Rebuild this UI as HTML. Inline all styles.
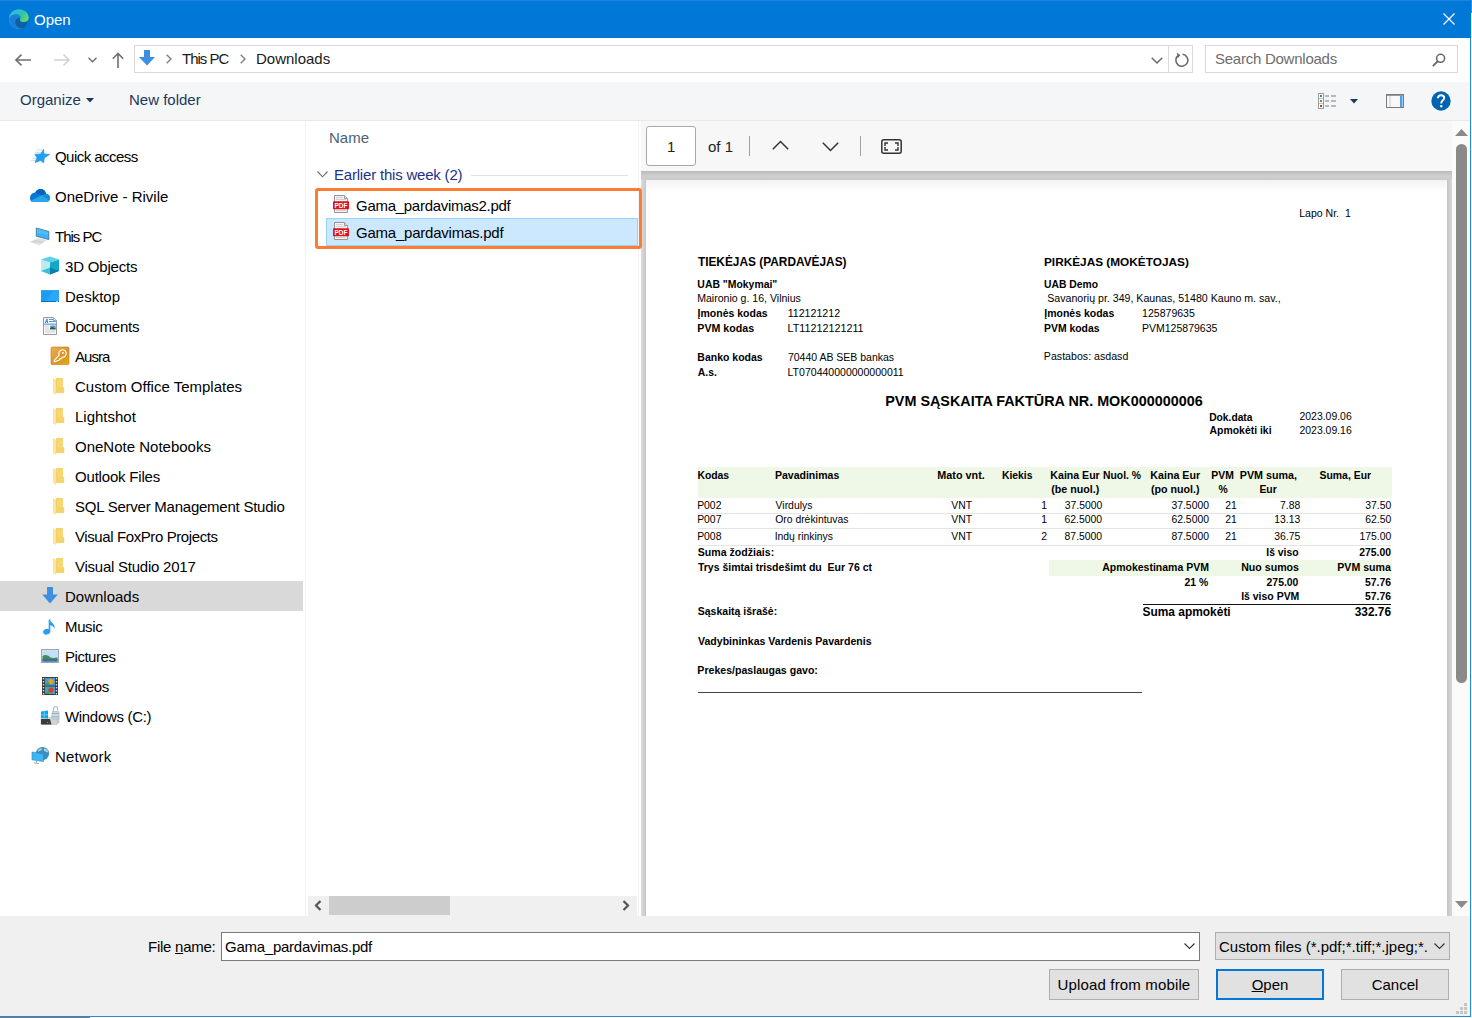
<!DOCTYPE html>
<html><head><meta charset="utf-8">
<style>
*{margin:0;padding:0;box-sizing:border-box}
html,body{width:1472px;height:1018px;overflow:hidden;background:#fff;font-family:"Liberation Sans",sans-serif;}
.a{position:absolute}
.t{position:absolute;white-space:nowrap;font-size:15px;line-height:18px;color:#000}
svg{position:absolute;overflow:visible}
#title{left:0;top:0;width:1471px;height:38px;background:#0078d7;border-top:1px solid #1a85db}
#rb{left:1470px;top:38px;width:1px;height:979px;background:#2b88d8}
#bb{left:0;top:1016px;width:1471px;height:1px;background:#2b88d8}
#tool{left:0;top:82px;width:1470px;height:39px;background:#f5f6f7;border-bottom:1px solid #e8e9eb}
#sep1{left:305px;top:121px;width:1px;height:795px;background:#f2f2f2}
#bottom{left:0;top:916px;width:1470px;height:100px;background:#f0f0f0}
.btn{position:absolute;background:#e1e1e1;border:1px solid #adadad;font-size:15px;text-align:center;line-height:29px;color:#000}
.nav .t{color:#000}
.pn,.pb{position:absolute;white-space:pre;line-height:1;color:#000}.pb{font-weight:bold}
</style></head><body>
<!-- title bar -->
<div id="title" class="a"></div>
<svg style="left:9px;top:9px" width="20" height="20" viewBox="0 0 20 20">
  <defs>
    <linearGradient id="eg1" x1="0" y1="0" x2="1" y2="0.6"><stop offset="0" stop-color="#35b8f0"/><stop offset="0.6" stop-color="#2ec3b0"/><stop offset="1" stop-color="#7ee04a"/></linearGradient>
  </defs>
  <path d="M10 0.3 C15.5 0.3 19.7 4.2 19.7 8.6 C19.7 11.8 17.2 13.2 14.5 13.2 C12 13.2 10.6 11.9 10.6 10.4 C10.6 9.5 11.3 8.9 11.3 8.9 C9.2 8.5 6.3 9.8 6.3 13.2 C6.3 16.4 9.4 19.6 13.8 19.7 C12.6 19.9 11.4 20 10 20 C4.5 20 0 15.5 0 10 C0 4.5 4.5 0.3 10 0.3 Z" fill="url(#eg1)"/>
  <path d="M0.2 9.3 C1.5 5.5 5.5 4.8 8 5.3 C10.5 5.8 12 7.3 11.6 8.8 C8.8 8.2 6.1 10 6.1 13.1 C6.1 16.5 9 19.4 13.8 19.8 C12.7 20 11.4 20 10 20 C4.2 20 0 15.4 0.2 9.3Z" fill="#1a7fd6"/>
  <path d="M6.1 13.1 C6.1 10 8.8 8.2 11.6 8.8 C11 9.6 10.8 10.2 10.8 10.7 C10.8 12.2 12.2 13.3 14.4 13.3 C16.2 13.3 17.8 12.7 18.6 12 C18 16.2 15.4 19.4 13.4 19.7 C9 19.3 6.1 16.4 6.1 13.1Z" fill="#0f5fa8"/>
</svg>
<div class="t" style="left:34px;top:11px;color:#fff">Open</div>
<svg style="left:1443px;top:13px" width="12" height="12" viewBox="0 0 12 12"><path d="M0.5 0.5L11.5 11.5M11.5 0.5L0.5 11.5" stroke="#fff" stroke-width="1.2"/></svg>

<!-- address row -->
<svg style="left:15px;top:54px" width="17" height="12" viewBox="0 0 17 12"><path d="M1 6H16M6.5 0.7L1 6L6.5 11.3" stroke="#6f6f6f" stroke-width="1.6" fill="none"/></svg>
<svg style="left:54px;top:54px" width="17" height="12" viewBox="0 0 17 12"><path d="M0 6H15M9.5 0.7L15 6L9.5 11.3" stroke="#d2d2d2" stroke-width="1.6" fill="none"/></svg>
<svg style="left:88px;top:57px" width="9" height="6" viewBox="0 0 9 6"><path d="M0.5 0.8L4.5 4.8L8.5 0.8" stroke="#707070" stroke-width="1.4" fill="none"/></svg>
<svg style="left:112px;top:52px" width="12" height="16" viewBox="0 0 12 16"><path d="M6 1.5V16M0.8 6.8L6 1.5L11.2 6.8" stroke="#6f6f6f" stroke-width="1.6" fill="none"/></svg>
<div class="a" style="left:134px;top:45px;width:1059px;height:28px;border:1px solid #d9d9d9"></div>
<div class="a" style="left:1168px;top:46px;width:1px;height:26px;background:#d9d9d9"></div>
<svg style="left:139px;top:50px" width="16" height="16" viewBox="0 0 16 16"><path d="M5 0H11V7H16L8 15.5L0 7H5Z" fill="#3d8fe0"/></svg>
<svg style="left:166px;top:54px" width="6" height="10" viewBox="0 0 6 10"><path d="M0.7 0.7L5 5L0.7 9.3" stroke="#808080" stroke-width="1.4" fill="none"/></svg>
<div class="t" style="left:182px;top:50px;color:#1a1a1a;letter-spacing:-1px">This PC</div>
<svg style="left:240px;top:54px" width="6" height="10" viewBox="0 0 6 10"><path d="M0.7 0.7L5 5L0.7 9.3" stroke="#808080" stroke-width="1.4" fill="none"/></svg>
<div class="t" style="left:256px;top:50px;color:#1a1a1a">Downloads</div>
<svg style="left:1151px;top:57px" width="12" height="7" viewBox="0 0 12 7"><path d="M0.7 0.7L6 6L11.3 0.7" stroke="#6a6a6a" stroke-width="1.5" fill="none"/></svg>
<svg style="left:1174px;top:53px" width="15" height="14" viewBox="0 0 15 14"><path d="M4.5 2.2A6 6 0 1 0 8.5 1.2" stroke="#6a6a6a" stroke-width="1.6" fill="none"/><path d="M3 0.5L5.3 2.3L3.4 4.6" stroke="#6a6a6a" stroke-width="1.5" fill="none"/></svg>
<div class="a" style="left:1205px;top:45px;width:253px;height:28px;border:1px solid #d9d9d9"></div>
<div class="t" style="left:1215px;top:50px;color:#6d6d6d;letter-spacing:-0.25px">Search Downloads</div>
<svg style="left:1432px;top:53px" width="14" height="14" viewBox="0 0 14 14"><circle cx="8.6" cy="5.3" r="4" stroke="#6a6a6a" stroke-width="1.6" fill="none"/><path d="M6 8L0.8 13.2" stroke="#6a6a6a" stroke-width="1.8"/></svg>

<!-- toolbar -->
<div id="tool" class="a"></div>
<div class="t" style="left:20px;top:91px;color:#1e395b">Organize</div>
<svg style="left:86px;top:98px" width="8" height="5" viewBox="0 0 8 5"><path d="M0 0H8L4 4.5Z" fill="#1e395b"/></svg>
<div class="t" style="left:129px;top:91px;color:#1e395b">New folder</div>
<svg style="left:1318px;top:93px" width="19" height="16" viewBox="0 0 19 16">
 <rect x="0.5" y="0.5" width="5" height="15" fill="#fff" stroke="#9a9a9a"/>
 <rect x="2" y="2" width="2" height="2" fill="#3a7ac8"/><rect x="2" y="7" width="2" height="2" fill="#5aa040"/><rect x="2" y="12" width="2" height="2" fill="#c83a2a"/><path d="M1 5.5H5M1 10.5H5" stroke="#b0b0b0" stroke-width="0.8"/>
 <path d="M7 3H11M13 3H18M7 8H11M13 8H18M7 13H11M13 13H18" stroke="#7a7a7a" stroke-width="1"/>
</svg>
<svg style="left:1350px;top:99px" width="8" height="5" viewBox="0 0 8 5"><path d="M0 0H8L4 4.5Z" fill="#1e395b"/></svg>
<svg style="left:1386px;top:94px" width="18" height="14" viewBox="0 0 18 14"><rect x="0.5" y="0.5" width="17" height="13" fill="#f8f8f8" stroke="#7a7a7a"/><rect x="1" y="1" width="16" height="1" fill="#9a9a9a"/><rect x="14" y="2" width="2.5" height="11" fill="#4da0e8"/><rect x="3.5" y="2" width="1" height="11" fill="#c8c8c8"/></svg>
<svg style="left:1431px;top:91px" width="20" height="20" viewBox="0 0 20 20"><circle cx="10" cy="10" r="9.7" fill="#0063b1"/><path d="M6.9 7.2C6.9 5.2 8.3 4.2 10.1 4.2C12 4.2 13.2 5.4 13.2 7C13.2 9.3 10.3 9.5 10.3 11.9V12.6" stroke="#fff" stroke-width="1.9" fill="none"/><rect x="9.2" y="14.1" width="2.2" height="2.2" fill="#fff"/></svg>

<!-- nav pane -->
<div id="nav">
<svg width="0" height="0" style="left:0;top:0">
 <defs>
  
 </defs>
</svg>
<!-- Quick access star -->
<svg style="left:28px;top:144px" width="26" height="24" viewBox="0 0 26 24"><path d="M8.5 5.8H14M7 8.3H13M4.5 14.2H8.5M3 16.3H8" stroke="#b5dcf7" stroke-width="0.9"/><path d="M15.6 5.2L16 9.9L21.7 10.4L16.3 13.9L15.6 18.9L12.7 16.5L7.1 18.6L9 13.7L6.8 10.4L12.7 9.9Z" fill="#22a0f0" stroke="#1a8ce0" stroke-width="0.6" stroke-linejoin="round"/></svg>
<div class="t" style="left:55px;top:148px;letter-spacing:-0.55px">Quick access</div>
<!-- OneDrive -->
<svg style="left:28px;top:184px" width="26" height="22" viewBox="0 0 26 22"><path d="M4.5 17.9C2.8 17.9 2 16 2 14.3C2 11.2 4.2 8.8 7.2 8.6C8.4 6.3 10.3 5.1 12.4 5.1C15.3 5.1 17.4 7 18 9.8C20.3 10 22 11.8 22 14.1C22 16.3 20.4 17.9 18.3 17.9Z" fill="#0a78d8"/><path d="M7.2 8.6C8.4 6.3 10.3 5.1 12.4 5.1C15.3 5.1 17.4 7 18 9.8L13.8 11.2Z" fill="#0364b8"/><path d="M13.8 11.2L18 9.8C20.3 10 22 11.8 22 14.1C22 15.2 21.7 16 21.3 16.5Z" fill="#1490df"/><path d="M3.2 16.6L13.8 11.2L21.4 16.4C20.8 17.4 19.7 17.9 18.3 17.9H4.5C3.9 17.9 3.5 17.3 3.2 16.6Z" fill="#28a8ea"/></svg>
<div class="t" style="left:55px;top:188px">OneDrive - Rivile</div>
<!-- This PC -->
<svg style="left:28px;top:224px" width="26" height="24" viewBox="0 0 26 24"><path d="M2.5 17.8L10.5 14.8L18 16.2L11.5 20.8Z" fill="#dde1e5" stroke="#c9ced3" stroke-width="0.5"/><path d="M5 17.5L13 18.5M7 16.5L15 17.8" stroke="#c3c8cd" stroke-width="0.6"/><path d="M8.3 4L20.8 7.5V15.6L8.3 12.2Z" fill="#3cb4f5" stroke="#3a6f90" stroke-width="0.8" stroke-linejoin="round"/><path d="M9 4.8L20 8V11L9 9Z" fill="#5cc4f8" opacity="0.6"/></svg>
<div class="t" style="left:55px;top:228px;letter-spacing:-1px">This PC</div>
<!-- 3D objects -->
<svg style="left:40px;top:256px" width="20" height="19" viewBox="0 0 20 19"><path d="M1 3.5L10 6.5V18.5L1 15Z" fill="#bfeaf2"/><path d="M10 6.5L19 3.5V15L10 18.5Z" fill="#14a8c8"/><path d="M1 3.5L10 0.5L19 3.5L10 6.5Z" fill="#5cd0e6"/><path d="M1 15L10 11.5V18.5Z" fill="#38c0d8"/><path d="M10 11.5L19 15L10 18.5Z" fill="#0a7fa8"/></svg>
<div class="t" style="left:65px;top:258px;letter-spacing:-0.18px">3D Objects</div>
<!-- Desktop -->
<svg style="left:41px;top:290px" width="18" height="12" viewBox="0 0 18 12"><rect x="0" y="0" width="18" height="12" fill="#1c9cf6"/><path d="M4 12L13 0H18V12Z" fill="#2aa6fa"/><rect x="0" y="0" width="18" height="0.8" fill="#3aa8f0"/><rect x="0" y="11" width="18" height="1" fill="#0d6fc0"/><rect x="15" y="11" width="2" height="1" fill="#9ccff0"/></svg>
<div class="t" style="left:65px;top:288px">Desktop</div>
<!-- Documents -->
<svg style="left:43px;top:317px" width="14" height="18" viewBox="0 0 14 18"><path d="M0.5 0.5H10.5L13.5 3.5V17.5H0.5Z" fill="#fbfbfb" stroke="#8e8e8e" stroke-width="0.9"/><path d="M10.5 0.5V3.5H13.5" fill="#e8e8e8" stroke="#8e8e8e" stroke-width="0.7"/><path d="M2.2 6L4 1.8L4.6 6M2.8 4.5H4.5" stroke="#2a7ad8" stroke-width="0.9" fill="none"/><path d="M6 2.5H10M6 4.5H12.8" stroke="#3a8ae0" stroke-width="0.9"/><rect x="1" y="6.6" width="12" height="1" fill="#3a8ae0"/><path d="M2 9H6M2 11H6M2 13H12.5M2 15H12.5" stroke="#c8c8c8" stroke-width="0.9"/><rect x="7.2" y="8.5" width="5.5" height="3.8" fill="#5a9ac8"/><path d="M7.2 11L9 10L12.7 11.5V12.3H7.2Z" fill="#2a5a3a"/></svg>
<div class="t" style="left:65px;top:318px;letter-spacing:-0.16px">Documents</div>
<!-- Ausra -->
<svg style="left:46px;top:342px" width="26" height="26" viewBox="0 0 26 26"><defs><linearGradient id="ag" x1="0" y1="0" x2="1" y2="1"><stop offset="0" stop-color="#eab060"/><stop offset="0.6" stop-color="#dc9420"/><stop offset="1" stop-color="#e2b018"/></linearGradient></defs><rect x="5" y="5" width="18" height="17.6" rx="1.3" fill="url(#ag)" stroke="#c07a10" stroke-width="0.6"/><path d="M13.2 13.1A3.7 3.7 0 1 1 16.6 15.2L14.9 16.9L14 16.6L13.1 18.2L11.3 18.7L9.6 19.6C8.6 20 7.8 19.4 8.3 18.4Z" fill="#dc9628" stroke="#fff" stroke-width="1.15" stroke-linejoin="round"/><circle cx="16.9" cy="10.9" r="1" fill="#fff"/></svg>
<div class="t" style="left:75px;top:348px;letter-spacing:-0.95px">Ausra</div>
<svg style="left:48px;top:374px" width="22" height="24" viewBox="0 0 22 24"><path d="M5 4H15V13H16.2V19H8V4Z" fill="#f5d46f"/><path d="M8.5 6L15 5V13H8.5Z" fill="#f7d878" opacity="0.7"/><path d="M5 4L8.6 6.2V18.8L7.8 21L5 19.2Z" fill="#fde49a"/><path d="M8.6 6.2V18.8" stroke="#ecc860" stroke-width="0.7"/></svg>
<div class="t" style="left:75px;top:378px">Custom Office Templates</div>
<svg style="left:48px;top:404px" width="22" height="24" viewBox="0 0 22 24"><path d="M5 4H15V13H16.2V19H8V4Z" fill="#f5d46f"/><path d="M8.5 6L15 5V13H8.5Z" fill="#f7d878" opacity="0.7"/><path d="M5 4L8.6 6.2V18.8L7.8 21L5 19.2Z" fill="#fde49a"/><path d="M8.6 6.2V18.8" stroke="#ecc860" stroke-width="0.7"/></svg>
<div class="t" style="left:75px;top:408px">Lightshot</div>
<svg style="left:48px;top:434px" width="22" height="24" viewBox="0 0 22 24"><path d="M5 4H15V13H16.2V19H8V4Z" fill="#f5d46f"/><path d="M8.5 6L15 5V13H8.5Z" fill="#f7d878" opacity="0.7"/><path d="M5 4L8.6 6.2V18.8L7.8 21L5 19.2Z" fill="#fde49a"/><path d="M8.6 6.2V18.8" stroke="#ecc860" stroke-width="0.7"/></svg>
<div class="t" style="left:75px;top:438px">OneNote Notebooks</div>
<svg style="left:48px;top:464px" width="22" height="24" viewBox="0 0 22 24"><path d="M5 4H15V13H16.2V19H8V4Z" fill="#f5d46f"/><path d="M8.5 6L15 5V13H8.5Z" fill="#f7d878" opacity="0.7"/><path d="M5 4L8.6 6.2V18.8L7.8 21L5 19.2Z" fill="#fde49a"/><path d="M8.6 6.2V18.8" stroke="#ecc860" stroke-width="0.7"/></svg>
<div class="t" style="left:75px;top:468px;letter-spacing:-0.19px">Outlook Files</div>
<svg style="left:48px;top:494px" width="22" height="24" viewBox="0 0 22 24"><path d="M5 4H15V13H16.2V19H8V4Z" fill="#f5d46f"/><path d="M8.5 6L15 5V13H8.5Z" fill="#f7d878" opacity="0.7"/><path d="M5 4L8.6 6.2V18.8L7.8 21L5 19.2Z" fill="#fde49a"/><path d="M8.6 6.2V18.8" stroke="#ecc860" stroke-width="0.7"/></svg>
<div class="t" style="left:75px;top:498px;letter-spacing:-0.24px">SQL Server Management Studio</div>
<svg style="left:48px;top:524px" width="22" height="24" viewBox="0 0 22 24"><path d="M5 4H15V13H16.2V19H8V4Z" fill="#f5d46f"/><path d="M8.5 6L15 5V13H8.5Z" fill="#f7d878" opacity="0.7"/><path d="M5 4L8.6 6.2V18.8L7.8 21L5 19.2Z" fill="#fde49a"/><path d="M8.6 6.2V18.8" stroke="#ecc860" stroke-width="0.7"/></svg>
<div class="t" style="left:75px;top:528px;letter-spacing:-0.4px">Visual FoxPro Projects</div>
<svg style="left:48px;top:554px" width="22" height="24" viewBox="0 0 22 24"><path d="M5 4H15V13H16.2V19H8V4Z" fill="#f5d46f"/><path d="M8.5 6L15 5V13H8.5Z" fill="#f7d878" opacity="0.7"/><path d="M5 4L8.6 6.2V18.8L7.8 21L5 19.2Z" fill="#fde49a"/><path d="M8.6 6.2V18.8" stroke="#ecc860" stroke-width="0.7"/></svg>
<div class="t" style="left:75px;top:558px;letter-spacing:-0.24px">Visual Studio 2017</div>
<div class="a" style="left:0;top:581px;width:303px;height:30px;background:#d9d9d9"></div>
<svg style="left:42px;top:587px" width="16" height="17" viewBox="0 0 16 17"><path d="M5 0H11V7.5H15.8L8 16.5L0.2 7.5H5Z" fill="#3d8fe0"/></svg>
<div class="t" style="left:65px;top:588px">Downloads</div>
<svg style="left:42px;top:619px" width="15" height="16" viewBox="0 0 15 16"><path d="M7.5 0.5V12.5" stroke="#2a9df4" stroke-width="1.6"/><ellipse cx="4.7" cy="12.7" rx="3.6" ry="2.8" fill="#2a9df4" transform="rotate(-20 4.7 12.7)"/><path d="M7.5 0.5C9 4 13.5 4.5 12.5 10C12.2 8 10 6.5 7.5 6Z" fill="#2a9df4"/></svg>
<div class="t" style="left:65px;top:618px;letter-spacing:-0.37px">Music</div>
<svg style="left:41px;top:649px" width="18" height="14" viewBox="0 0 18 14"><rect x="0.5" y="0.5" width="17" height="13" fill="#dfe8ee" stroke="#9aa4aa"/><rect x="1.5" y="1.5" width="15" height="11" fill="#bfe0f5"/><path d="M1.5 7C4 5 7 6 9 8C11 9.5 14 9 16.5 8.5V12.5H1.5Z" fill="#4a8a5a"/><path d="M1.5 10C5 9.5 10 10.5 16.5 10V12.5H1.5Z" fill="#3a6ea8"/></svg>
<div class="t" style="left:65px;top:648px;letter-spacing:-0.47px">Pictures</div>
<svg style="left:42px;top:677px" width="16" height="18" viewBox="0 0 16 18"><rect x="0" y="0" width="16" height="18" fill="#3a3a3a"/><rect x="3" y="1" width="10" height="7.5" fill="#4a9ad8"/><rect x="3" y="9.5" width="10" height="7.5" fill="#4a9ad8"/><circle cx="9" cy="4.5" r="2.6" fill="#e8a020"/><circle cx="9" cy="13" r="2.6" fill="#d84020"/><path d="M3 7L7 5V8.5H3ZM3 16L7 14V17H3Z" fill="#40a040"/><g fill="#ddd"><rect x="0.8" y="1" width="1.4" height="1.4"/><rect x="0.8" y="4" width="1.4" height="1.4"/><rect x="0.8" y="7" width="1.4" height="1.4"/><rect x="0.8" y="10" width="1.4" height="1.4"/><rect x="0.8" y="13" width="1.4" height="1.4"/><rect x="0.8" y="16" width="1.4" height="1.4"/><rect x="13.8" y="1" width="1.4" height="1.4"/><rect x="13.8" y="4" width="1.4" height="1.4"/><rect x="13.8" y="7" width="1.4" height="1.4"/><rect x="13.8" y="10" width="1.4" height="1.4"/><rect x="13.8" y="13" width="1.4" height="1.4"/><rect x="13.8" y="16" width="1.4" height="1.4"/></g></svg>
<div class="t" style="left:65px;top:678px;letter-spacing:-0.26px">Videos</div>
<svg style="left:28px;top:702px" width="36" height="26" viewBox="0 0 36 26"><path d="M13 17L16 15H31V20.5L28.5 22.5H13Z" fill="#dcdfe2" stroke="#a8adb2" stroke-width="0.5"/><path d="M13 17H28.5V22.5H13Z" fill="#d0d4d8"/><path d="M13 17H22L23.5 22.5H13Z" fill="#3a3d40"/><path d="M28.5 17L31 15V20.5L28.5 22.5Z" fill="#c4c8cc"/><rect x="19" y="20" width="1.2" height="1" fill="#3ac040"/><path d="M13 9.5L20 8.5V16.5L13 16Z" fill="#0aa6ee"/><path d="M16.3 9V16.2M13 12.8H20" stroke="#9fdcf8" stroke-width="0.6"/><path d="M25.5 10.5V7C25.5 5.3 26.6 4.5 27.6 4.5C28.6 4.5 29.7 5.3 29.7 7V8.5" fill="none" stroke="#b4bcc2" stroke-width="1.1"/><rect x="24" y="9.5" width="7" height="7.5" rx="0.8" fill="#d4d9dd" stroke="#9aa4aa" stroke-width="0.5"/><path d="M24 11.5H31M24 14.8H31" stroke="#6aa0c8" stroke-width="0.7"/></svg>
<div class="t" style="left:65px;top:708px;letter-spacing:-0.32px">Windows (C:)</div>
<svg style="left:28px;top:744px" width="26" height="26" viewBox="0 0 26 26"><circle cx="14.5" cy="9.5" r="6.6" fill="#3d8ebc"/><path d="M10 6C11.5 4.2 13.5 4 14.5 5C13.5 6.5 11.5 6.5 10.5 8M16 4.5C18 4.5 20 6 20.5 8.5C19 8.5 17.5 7 16 7Z" fill="#bfe0f0" opacity="0.85"/><path d="M4 8L15.5 10V17.5L4 15.8Z" fill="#3db6f6" stroke="#2a84c0" stroke-width="0.6"/><path d="M6 18.8L11 19.6M8.5 17V19" stroke="#a8b0b8" stroke-width="1"/></svg>
<div class="t" style="left:55px;top:748px;letter-spacing:0.2px">Network</div>
</div>
<div id="sep1" class="a"></div>

<!-- file pane -->
<div id="files">
<div class="a" style="left:638px;top:121px;width:1px;height:795px;background:#f3f3f3"></div>
<div class="t" style="left:329px;top:129px;color:#4c607a">Name</div>
<svg style="left:317px;top:171px" width="11" height="7" viewBox="0 0 11 7"><path d="M0.5 0.5L5.5 5.8L10.5 0.5" stroke="#6a6a6a" stroke-width="1.1" fill="none"/></svg>
<div class="t" style="left:334px;top:166px;color:#1e3287;letter-spacing:-0.2px">Earlier this week (2)</div>
<div class="a" style="left:471px;top:175px;width:157px;height:1px;background:#e2e2e2"></div>
<div class="a" style="left:326px;top:218px;width:312px;height:28px;background:#cce8ff;border:1px solid #99d1ff"></div>
<svg width="0" height="0" style="left:0;top:0"><defs></defs></svg>
<svg style="left:333px;top:195px" width="16" height="18" viewBox="0 0 16 18"><path d="M1.5 0.5H11.5L14.5 3.5V17.5H1.5Z" fill="#f4f4f4" stroke="#8a8a8a" stroke-width="0.9"/><path d="M11.5 0.5V3.5H14.5" fill="#ddd" stroke="#8a8a8a" stroke-width="0.8"/><path d="M3 2.5H10M3 4.5H13M3 15.5H13" stroke="#d0d0d0" stroke-width="1"/><rect x="0" y="6.3" width="16" height="8" rx="0.8" fill="#e01020"/><text x="8" y="12.9" font-family="Liberation Sans" font-size="6.6" font-weight="bold" fill="#fff" text-anchor="middle">PDF</text></svg>
<div class="t" style="left:356px;top:197px;letter-spacing:-0.28px">Gama_pardavimas2.pdf</div>
<svg style="left:333px;top:222px" width="16" height="18" viewBox="0 0 16 18"><path d="M1.5 0.5H11.5L14.5 3.5V17.5H1.5Z" fill="#f4f4f4" stroke="#8a8a8a" stroke-width="0.9"/><path d="M11.5 0.5V3.5H14.5" fill="#ddd" stroke="#8a8a8a" stroke-width="0.8"/><path d="M3 2.5H10M3 4.5H13M3 15.5H13" stroke="#d0d0d0" stroke-width="1"/><rect x="0" y="6.3" width="16" height="8" rx="0.8" fill="#e01020"/><text x="8" y="12.9" font-family="Liberation Sans" font-size="6.6" font-weight="bold" fill="#fff" text-anchor="middle">PDF</text></svg>
<div class="t" style="left:356px;top:224px;letter-spacing:-0.23px">Gama_pardavimas.pdf</div>

<!-- h scrollbar -->
<div class="a" style="left:308px;top:896px;width:329px;height:20px;background:#f0f0f0"></div>
<div class="a" style="left:329px;top:896px;width:121px;height:19px;background:#cdcdcd"></div>
<svg style="left:314px;top:900px" width="8" height="11" viewBox="0 0 8 11"><path d="M6.5 1L2 5.5L6.5 10" stroke="#555" stroke-width="2.2" fill="none"/></svg>
<svg style="left:622px;top:900px" width="8" height="11" viewBox="0 0 8 11"><path d="M1.5 1L6 5.5L1.5 10" stroke="#555" stroke-width="2.2" fill="none"/></svg>
</div>

<!-- preview pane -->
<div id="preview">
<div class="a" style="left:641px;top:121px;width:811px;height:50px;background:#f7f7f7"></div>
<div class="a" style="left:646px;top:126px;width:50px;height:40px;background:#fff;border:1px solid #a8a8a8;border-radius:3px"></div>
<div class="t" style="left:667px;top:138px;color:#222">1</div>
<div class="t" style="left:708px;top:138px;color:#222">of 1</div>
<div class="a" style="left:749px;top:136px;width:1px;height:20px;background:#a0a0a0"></div>
<svg style="left:772px;top:140px" width="17" height="10" viewBox="0 0 17 10"><path d="M0.8 9.2L8.5 1.5L16.2 9.2" stroke="#333" stroke-width="1.5" fill="none"/></svg>
<svg style="left:822px;top:142px" width="17" height="10" viewBox="0 0 17 10"><path d="M0.8 0.8L8.5 8.5L16.2 0.8" stroke="#333" stroke-width="1.5" fill="none"/></svg>
<div class="a" style="left:860px;top:136px;width:1px;height:20px;background:#a0a0a0"></div>
<svg style="left:881px;top:139px" width="21" height="15" viewBox="0 0 21 15"><rect x="0.8" y="0.8" width="19.4" height="13.4" rx="2" fill="none" stroke="#333" stroke-width="1.5"/><path d="M4 7V4H7M14 4H17V7M17 8V11H14M7 11H4V8" stroke="#333" stroke-width="1.4" fill="none"/></svg>
<!-- frame -->
<div class="a" style="left:641px;top:171px;width:811px;height:745px;background:linear-gradient(#b9b9b9,#d0d0d0 5px,#c9c9c9 9px,#d2d2d2 10px)"></div>
<div class="a" style="left:641px;top:179px;width:5px;height:737px;background:linear-gradient(90deg,#dcdcdc,#c6c6c6)"></div>
<div class="a" style="left:1447px;top:179px;width:5px;height:737px;background:linear-gradient(90deg,#c4c4c4,#d8d8d8)"></div>
<div id="page" class="a" style="left:646px;top:180px;width:801px;height:736px;background:linear-gradient(#f2f2f2,#fff 12px,#fff)"></div>
<div id="pdf">
<div class="a" style="left:698px;top:467px;width:694px;height:31px;background:#eff8e6"></div>
<div class="a" style="left:698px;top:513px;width:694px;height:1px;background:#e4e4e4"></div>
<div class="a" style="left:698px;top:528px;width:693px;height:1px;background:#e4e4e4"></div>
<div class="a" style="left:698px;top:545px;width:693px;height:1px;background:#e4e4e4"></div>
<div class="a" style="left:1049px;top:560px;width:343px;height:16px;background:#eff8e6"></div>
<div class="a" style="left:1143px;top:604px;width:248px;height:1px;background:#111"></div>
<div class="a" style="left:698px;top:692px;width:444px;height:1px;background:#444"></div>
<svg class="a" style="left:0;top:0;overflow:visible" width="1472" height="1018"><g font-family="Liberation Sans" fill="#000" style="white-space:pre"><text x="1299.16" y="217" font-size="10.55">Lapo Nr.  1</text>
<text x="697.88" y="266" font-size="11.89" font-weight="bold">TIEKĖJAS (PARDAVĖJAS)</text>
<text x="697.37" y="288" font-size="10.43" font-weight="bold">UAB "Mokymai"</text>
<text x="697.15" y="302" font-size="10.57">Maironio g. 16, Vilnius</text>
<text x="697.58" y="317" font-size="10.51" font-weight="bold">Įmonės kodas</text>
<text x="787.65" y="317" font-size="10.65">112121212</text>
<text x="697.36" y="332" font-size="10.64" font-weight="bold">PVM kodas</text>
<text x="787.54" y="332" font-size="10.77">LT11212121211</text>
<text x="697.37" y="361" font-size="10.49" font-weight="bold">Banko kodas</text>
<text x="787.88" y="361" font-size="10.5">70440 AB SEB bankas</text>
<text x="697.79" y="376" font-size="10.4" font-weight="bold">A.s.</text>
<text x="787.56" y="376" font-size="10.54">LT070440000000000011</text>
<text x="1043.99" y="266" font-size="11.82" font-weight="bold">PIRKĖJAS (MOKĖTOJAS)</text>
<text x="1044.08" y="288" font-size="10.33" font-weight="bold">UAB Demo</text>
<text x="1047.28" y="302" font-size="10.61">Savanorių pr. 349, Kaunas, 51480 Kauno m. sav.,</text>
<text x="1044.28" y="317" font-size="10.51" font-weight="bold">Įmonės kodas</text>
<text x="1142.06" y="317" font-size="10.55">125879635</text>
<text x="1044.08" y="332" font-size="10.4" font-weight="bold">PVM kodas</text>
<text x="1141.96" y="332" font-size="10.52">PVM125879635</text>
<text x="1043.85" y="360" font-size="10.64">Pastabos: asdasd</text>
<text x="885.24" y="406" font-size="14.38" font-weight="bold">PVM SĄSKAITA FAKTŪRA NR. MOK000000006</text>
<text x="1209.18" y="421" font-size="10.25" font-weight="bold">Dok.data</text>
<text x="1299.48" y="420" font-size="10.45">2023.09.06</text>
<text x="1209.59" y="434" font-size="10.43" font-weight="bold">Apmokėti iki</text>
<text x="1299.48" y="434" font-size="10.45">2023.09.16</text>
<text x="697.38" y="479" font-size="10.4" font-weight="bold">Kodas</text>
<text x="774.97" y="479" font-size="10.53" font-weight="bold">Pavadinimas</text>
<text x="937.35" y="479" font-size="10.8" font-weight="bold">Mato vnt.</text>
<text x="1001.88" y="479" font-size="10.4" font-weight="bold">Kiekis</text>
<text x="1050.36" y="479" font-size="10.59" font-weight="bold">Kaina Eur</text>
<text x="1102.98" y="479" font-size="10.4" font-weight="bold">Nuol. %</text>
<text x="1051.27" y="493" font-size="10.69" font-weight="bold">(be nuol.)</text>
<text x="1150.36" y="479" font-size="10.65" font-weight="bold">Kaina Eur</text>
<text x="1151.07" y="493" font-size="10.67" font-weight="bold">(po nuol.)</text>
<text x="1211.28" y="479" font-size="10.4" font-weight="bold">PVM</text>
<text x="1218.39" y="493" font-size="10.4" font-weight="bold">%</text>
<text x="1239.76" y="479" font-size="10.73" font-weight="bold">PVM suma,</text>
<text x="1259.38" y="493" font-size="10.4" font-weight="bold">Eur</text>
<text x="1319.49" y="479" font-size="10.45" font-weight="bold">Suma, Eur</text>
<text x="697.79" y="556" font-size="10.58" font-weight="bold">Suma žodžiais:</text>
<text x="1266.28" y="556" font-size="10.4" font-weight="bold">Iš viso</text>
<text x="1359.29" y="556" font-size="10.4" font-weight="bold">275.00</text>
<text x="697.89" y="571" font-size="10.53" font-weight="bold">Trys šimtai trisdešimt du  Eur 76 ct</text>
<text x="1102.19" y="571" font-size="10.5" font-weight="bold">Apmokestinama PVM</text>
<text x="1241.16" y="571" font-size="10.64" font-weight="bold">Nuo sumos</text>
<text x="1337.26" y="571" font-size="10.6" font-weight="bold">PVM suma</text>
<text x="1184.49" y="586" font-size="10.4" font-weight="bold">21 %</text>
<text x="1266.59" y="586" font-size="10.4" font-weight="bold">275.00</text>
<text x="1364.99" y="586" font-size="10.4" font-weight="bold">57.76</text>
<text x="1241.17" y="600" font-size="10.47" font-weight="bold">Iš viso PVM</text>
<text x="1364.99" y="600" font-size="10.4" font-weight="bold">57.76</text>
<text x="1142.46" y="616" font-size="11.95" font-weight="bold">Suma apmokėti</text>
<text x="1354.76" y="616" font-size="11.85" font-weight="bold">332.76</text>
<text x="697.79" y="615" font-size="10.51" font-weight="bold">Sąskaitą išrašė:</text>
<text x="698.00" y="645" font-size="10.55" font-weight="bold">Vadybininkas Vardenis Pavardenis</text>
<text x="697.36" y="674" font-size="10.59" font-weight="bold">Prekes/paslaugas gavo:</text>
<text x="697.17" y="509" font-size="10.4">P002</text>
<text x="775.60" y="509" font-size="10.4">Virdulys</text>
<text x="951.25" y="509" font-size="10.4">VNT</text>
<text x="1047.08" y="509" font-size="10.4" text-anchor="end">1</text>
<text x="1064.69" y="509" font-size="10.4">37.5000</text>
<text x="1208.98" y="509" font-size="10.4" text-anchor="end">37.5000</text>
<text x="1225.18" y="509" font-size="10.4">21</text>
<text x="1300.28" y="509" font-size="10.4" text-anchor="end">7.88</text>
<text x="1391.28" y="509" font-size="10.4" text-anchor="end">37.50</text>
<text x="697.17" y="523" font-size="10.4">P007</text>
<text x="775.18" y="523" font-size="10.4">Oro drėkintuvas</text>
<text x="951.25" y="523" font-size="10.4">VNT</text>
<text x="1047.08" y="523" font-size="10.4" text-anchor="end">1</text>
<text x="1064.48" y="523" font-size="10.4">62.5000</text>
<text x="1208.98" y="523" font-size="10.4" text-anchor="end">62.5000</text>
<text x="1225.18" y="523" font-size="10.4">21</text>
<text x="1300.28" y="523" font-size="10.4" text-anchor="end">13.13</text>
<text x="1391.28" y="523" font-size="10.4" text-anchor="end">62.50</text>
<text x="697.17" y="540" font-size="10.4">P008</text>
<text x="774.66" y="540" font-size="10.4">Indų rinkinys</text>
<text x="951.25" y="540" font-size="10.4">VNT</text>
<text x="1047.08" y="540" font-size="10.4" text-anchor="end">2</text>
<text x="1064.58" y="540" font-size="10.4">87.5000</text>
<text x="1208.98" y="540" font-size="10.4" text-anchor="end">87.5000</text>
<text x="1225.18" y="540" font-size="10.4">21</text>
<text x="1300.28" y="540" font-size="10.4" text-anchor="end">36.75</text>
<text x="1391.28" y="540" font-size="10.4" text-anchor="end">175.00</text></g></svg>
</div>
<!-- v scrollbar -->
<div class="a" style="left:1452px;top:121px;width:18px;height:795px;background:#fbfbfb"></div>
<svg style="left:1455px;top:129px" width="13" height="7" viewBox="0 0 13 7"><path d="M6.5 0L13 7H0Z" fill="#8a8a8a"/></svg>
<div class="a" style="left:1456px;top:144px;width:11px;height:539px;background:#8a8a8a;border-radius:5.5px"></div>
<svg style="left:1455px;top:901px" width="13" height="7" viewBox="0 0 13 7"><path d="M0 0H13L6.5 7Z" fill="#8a8a8a"/></svg>
</div>

<!-- bottom -->
<div id="bottom" class="a"></div>
<div class="t" style="left:148px;top:938px;letter-spacing:-0.25px">File <u>n</u>ame:</div>
<div class="a" style="left:221px;top:932px;width:979px;height:29px;background:#fff;border:1px solid #7a7a7a"></div>
<div class="t" style="left:225px;top:938px;letter-spacing:-0.25px">Gama_pardavimas.pdf</div>
<svg style="left:1184px;top:943px" width="11" height="6" viewBox="0 0 11 6"><path d="M0.5 0.5L5.5 5.5L10.5 0.5" stroke="#333" stroke-width="1.1" fill="none"/></svg>
<div class="a" style="left:1215px;top:932px;width:235px;height:28px;background:#e1e1e1;border:1px solid #adadad;overflow:hidden"><div class="a" style="left:3px;top:0;width:208px;height:26px;overflow:hidden"><div class="t" style="left:0;top:5px">Custom files (*.pdf;*.tiff;*.jpeg;*.tif</div></div></div>
<svg style="left:1434px;top:943px" width="11" height="6" viewBox="0 0 11 6"><path d="M0.5 0.5L5.5 5.5L10.5 0.5" stroke="#333" stroke-width="1.1" fill="none"/></svg>
<div class="btn" style="left:1049px;top:969px;width:150px;height:31px;letter-spacing:0.15px">Upload from mobile</div>
<div class="btn" style="left:1216px;top:969px;width:108px;height:31px;border:2px solid #0078d7;line-height:27px"><u>O</u>pen</div>
<div class="btn" style="left:1341px;top:969px;width:108px;height:31px">Cancel</div>
<svg style="left:1456px;top:1003px" width="11" height="11" viewBox="0 0 11 11"><g fill="#c6c6c6"><rect x="8" y="0" width="3" height="3"/><rect x="4" y="4" width="3" height="3"/><rect x="8" y="4" width="3" height="3"/><rect x="0" y="8" width="3" height="3"/><rect x="4" y="8" width="3" height="3"/><rect x="8" y="8" width="3" height="3"/></g></svg>

<div class="a" style="left:315px;top:188px;width:327px;height:61px;border:3px solid #ff7b33;border-radius:3px"></div>
<div id="rb" class="a"></div>
<div id="bb" class="a"></div>
<div class="a" style="left:1471px;top:0;width:1px;height:13px;background:#857b72"></div>
<div class="a" style="left:0;top:1017px;width:90px;height:1px;background:#7f7a74"></div>
</body></html>
